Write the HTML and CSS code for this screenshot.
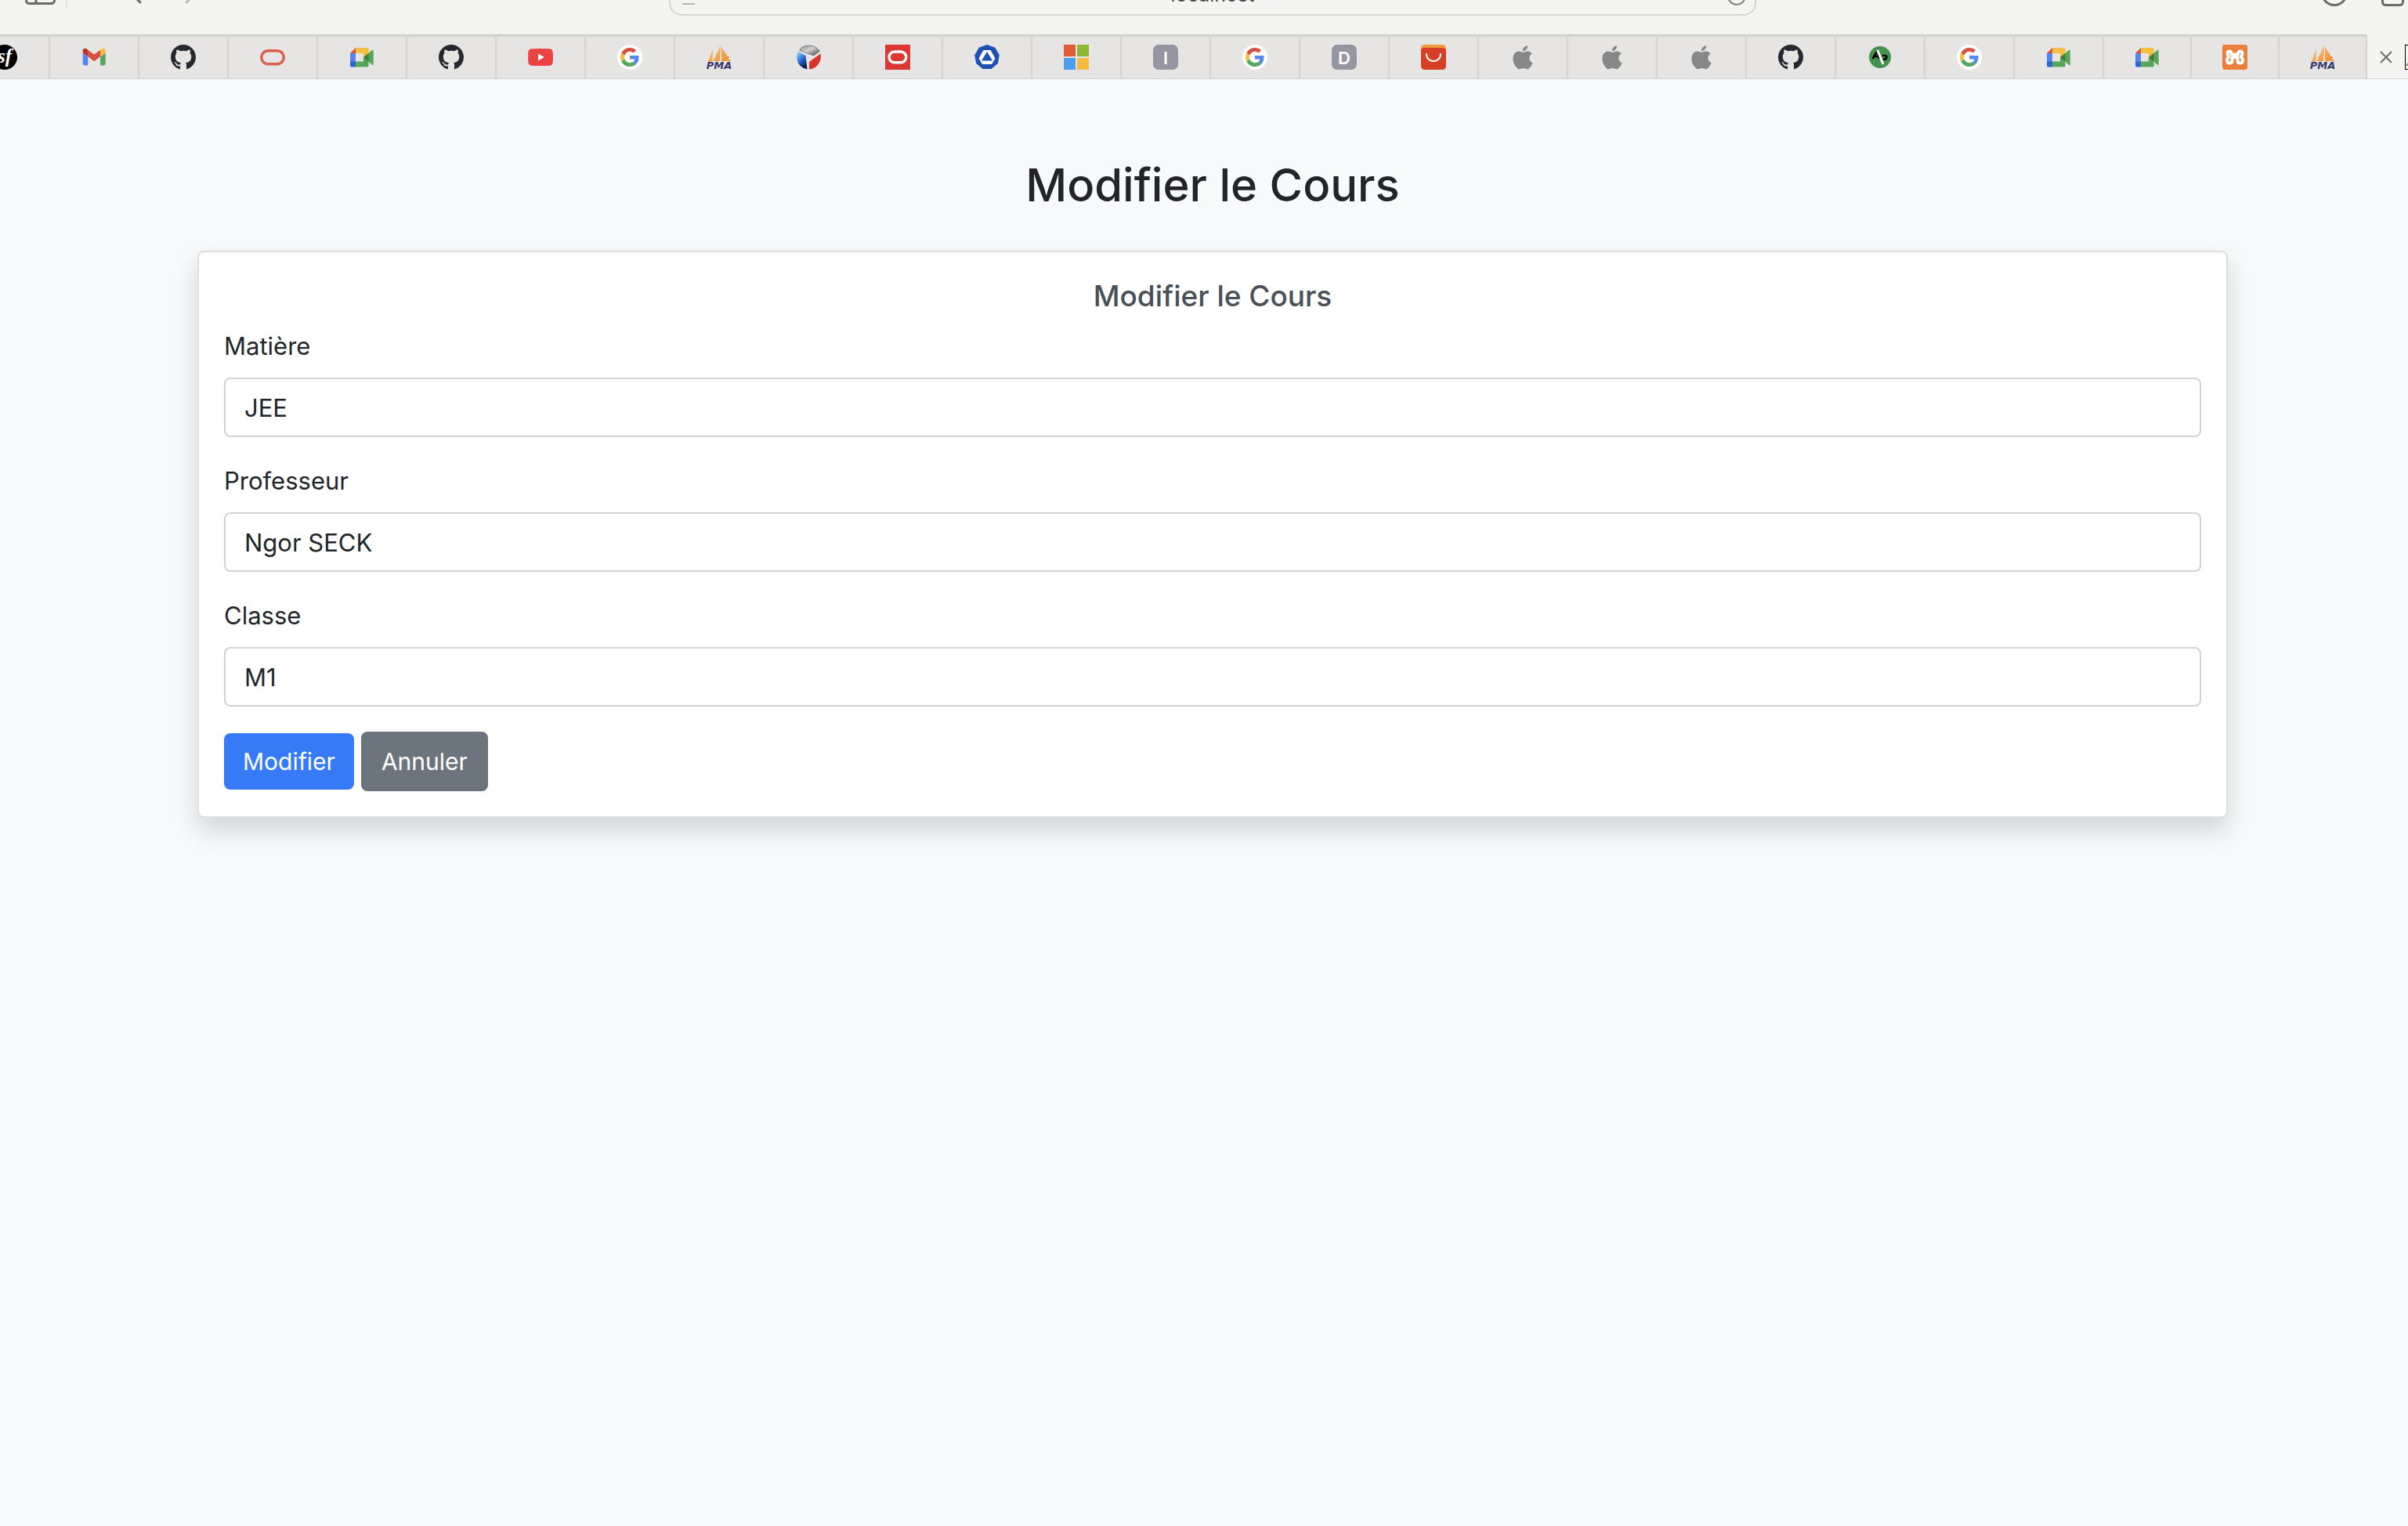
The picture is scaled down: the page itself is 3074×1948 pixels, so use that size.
FILE: index.html
```html
<!DOCTYPE html>
<html lang="fr">
<head>
<meta charset="utf-8">
<title>Modifier le Cours</title>
<link rel="stylesheet" href="styles.css">
</head>
<body>
<svg class="sprite" aria-hidden="true">
  <defs>
    <linearGradient id="sail" x1="0" y1="0" x2="1" y2="1"><stop offset="0" stop-color="#f8c88c"/><stop offset="1" stop-color="#ee8a2c"/></linearGradient>
    <linearGradient id="steel" x1="0" y1="0" x2="1" y2="1"><stop offset="0" stop-color="#8a8a8a"/><stop offset=".45" stop-color="#d0d0d0"/><stop offset="1" stop-color="#3c3c3c"/></linearGradient>
    <linearGradient id="azure" x1="0" y1="0" x2=".5" y2="1"><stop offset="0" stop-color="#a4e4f4"/><stop offset=".55" stop-color="#2c6cdc"/><stop offset="1" stop-color="#0c1c50"/></linearGradient>
    <symbol id="gmail" viewBox="0 0 32 32"><g transform="translate(1.7 4.7) scale(.33) translate(-52 -42)"><path fill="#5585ee" d="M58 108h14V74L52 59v43c0 3.32 2.69 6 6 6"/><path fill="#58a65c" d="M120 108h14c3.32 0 6-2.69 6-6V59l-20 15"/><path fill="#f3be42" d="M120 48v26l20-15v-8c0-7.42-8.47-11.65-14.4-7.2"/><path fill="#d8503f" d="M72 74V48l24 18 24-18v26L96 92"/><path fill="#b5352a" d="M52 51v8l20 15V48l-5.6-4.2c-5.94-4.45-14.4-.22-14.4 7.2"/></g></symbol>
    <symbol id="github" viewBox="0 0 16 16"><path fill="#25292f" d="M8 0C3.58 0 0 3.58 0 8c0 3.54 2.29 6.53 5.47 7.59.4.07.55-.17.55-.38 0-.19-.01-.82-.01-1.49-2.01.37-2.53-.49-2.69-.94-.09-.23-.48-.94-.82-1.13-.28-.15-.68-.52-.01-.53.63-.01 1.08.58 1.23.82.72 1.21 1.87.87 2.33.66.07-.52.28-.87.51-1.07-1.78-.2-3.64-.89-3.64-3.95 0-.87.31-1.59.82-2.15-.08-.2-.36-1.02.08-2.12 0 0 .67-.21 2.2.82.64-.18 1.32-.27 2-.27s1.36.09 2 .27c1.53-1.04 2.2-.82 2.2-.82.44 1.1.16 1.92.08 2.12.51.56.82 1.27.82 2.15 0 3.07-1.87 3.75-3.65 3.95.29.25.54.73.54 1.48 0 1.07-.01 1.93-.01 2.2 0 .21.15.46.55.38A8.01 8.01 0 0 0 16 8c0-4.42-3.58-8-8-8z"/></symbol>
    <symbol id="meet" viewBox="0 0 32 32"><g transform="translate(1 4) scale(.34)"><path fill="#3d7d3f" d="M49.5 36l8.53 9.75 11.47 7.33 2-17.02-2-16.64-11.69 6.44z"/><path fill="#3063cc" d="M0 51.5V66c0 3.315 2.685 6 6 6h14.5l3-10.96-3-9.54-9.95-3z"/><path fill="#d8503f" d="M20.5 0L0 20.5l10.55 3 9.95-3 2.95-9.41z"/><path fill="#5585ee" d="M20.5 20.5H0v31h20.5z"/><path fill="#58a65c" d="M82.6 8.68L69.5 19.42v33.66l13.16 10.79c1.97 1.54 4.85.135 4.85-2.37V11c0-2.535-2.945-3.925-4.91-2.32zM49.5 36v15.5h-29V72h43c3.315 0 6-2.685 6-6V53.08z"/><path fill="#f3be42" d="M63.5 0h-43v20.5h29V36l20-16.57V6c0-3.315-2.685-6-6-6z"/></g></symbol>
    <symbol id="google" viewBox="0 0 32 32"><circle cx="16" cy="16" r="16" fill="#fff"/><g transform="translate(4 4) scale(.5)"><path fill="#d8503f" d="M24 9.5c3.54 0 6.71 1.22 9.21 3.6l6.85-6.85C35.9 2.38 30.47 0 24 0 14.62 0 6.51 5.38 2.56 13.22l7.98 6.19C12.43 13.72 17.74 9.5 24 9.5z"/><path fill="#5585ee" d="M46.98 24.55c0-1.57-.15-3.09-.38-4.55H24v9.02h12.94c-.58 2.96-2.26 5.48-4.78 7.18l7.73 6c4.51-4.18 7.09-10.36 7.09-17.65z"/><path fill="#f3be42" d="M10.53 28.59c-.48-1.45-.76-2.99-.76-4.59s.27-3.14.76-4.59l-7.98-6.19C.92 16.46 0 20.12 0 24c0 3.88.92 7.54 2.56 10.78l7.97-6.19z"/><path fill="#58a65c" d="M24 48c6.48 0 11.93-2.13 15.89-5.81l-7.73-6c-2.15 1.45-4.92 2.3-8.16 2.3-6.26 0-11.57-4.22-13.47-9.91l-7.98 6.19C6.51 42.62 14.62 48 24 48z"/></g></symbol>
    <symbol id="pma" viewBox="0 0 32 32"><path fill="url(#sail)" d="M8 5L7.500 21l-6 1zM18 0l-1 21H8.500C11 15 15 8 18 0zM19 3l8 12 2 0-1 3 4 4-6-2 0 1h-7z"/><text class="pma-text" x="16" y="31" text-anchor="middle">PMA</text></symbol>
    <symbol id="apple" viewBox="0 0 32 32"><path fill="#878787" transform="translate(.5 1.3) scale(1.29 1.25)" d="M12.152 6.896c-.948 0-2.415-1.078-3.96-1.04-2.04.027-3.91 1.183-4.961 3.014-2.117 3.675-.546 9.103 1.519 12.09 1.013 1.454 2.208 3.09 3.792 3.039 1.52-.065 2.09-.987 3.935-.987 1.831 0 2.35.987 3.96.948 1.637-.026 2.676-1.48 3.676-2.948 1.156-1.688 1.636-3.325 1.662-3.415-.039-.013-3.182-1.221-3.22-4.857-.026-3.04 2.48-4.494 2.597-4.559-1.429-2.09-3.623-2.324-4.39-2.376-2-.156-3.675 1.09-4.61 1.09zM15.53 3.83c.843-1.012 1.4-2.427 1.245-3.83-1.207.052-2.662.805-3.532 1.818-.78.896-1.454 2.338-1.273 3.714 1.338.104 2.715-.688 3.559-1.701"/></symbol>
  </defs>
</svg>
<div class="window">
  <header class="chrome">
    <div class="toolbar">
      <div class="tools">
        <svg width="300" height="56" viewBox="0 0 300 56" fill="none" stroke="#6b6b69" stroke-width="3" stroke-linecap="round">
          <rect x="33.500" y="10" width="36" height="30.500" rx="4"/><path d="M46 10v30"/>
          <path d="M85 12v34" stroke="#e4e4e2" stroke-width="2" stroke-linecap="butt"/>
          <path d="M179 39L166 26l13-13"/><path d="M238 39l13-13-13-13" stroke="#b9b9b7"/>
        </svg>
      </div>
      <div class="address">
        <svg width="24" height="56" viewBox="0 0 24 56" stroke="#b4b4b2" stroke-width="2"><path d="M4 40h16M4 32h16"/></svg>
        <span>localhost</span>
        <svg width="24" height="56" viewBox="0 0 24 56" fill="none" stroke="#7b7b79" stroke-width="2"><path d="M17 20A11 11 0 1 0 23 30"/></svg>
      </div>
      <div class="tools tools-end">
        <svg width="140" height="56" viewBox="0 0 140 56" fill="none" stroke="#6b6b69" stroke-width="3"><circle cx="24" cy="27" r="15.500"/><rect x="85.500" y="12" width="26" height="30.500" rx="4"/></svg>
      </div>
    </div>
    <nav class="tabs" aria-label="Onglets">
      <a class="tab" href="#"><svg viewBox="0 0 32 32"><circle cx="16" cy="16" r="16"/><text class="sf" x="16" y="23" text-anchor="middle">sf</text></svg></a>
      <a class="tab" href="#"><svg><use href="#gmail"/></svg></a>
      <a class="tab" href="#"><svg><use href="#github"/></svg></a>
      <a class="tab" href="#"><svg viewBox="0 0 32 32"><rect x="1.700" y="7.700" width="28.600" height="17" rx="8.500" fill="none" stroke="#d9614b" stroke-width="3.400"/></svg></a>
      <a class="tab" href="#"><svg><use href="#meet"/></svg></a>
      <a class="tab" href="#"><svg><use href="#github"/></svg></a>
      <a class="tab" href="#"><svg viewBox="0 0 32 32"><path fill="#eb4242" d="M5 5.200Q16 4.800 27 5.200 31.500 5.400 31.700 10q.5 6 0 12-.2 4.600-4.700 4.800-11 .4-22 0Q.5 26.600.3 22q-.5-6 0-12Q.5 5.400 5 5.200z"/><path fill="#fff" d="M13 11.500l8 4.500-8 4.500z"/></svg></a>
      <a class="tab" href="#"><svg><use href="#google"/></svg></a>
      <a class="tab" href="#"><svg><use href="#pma"/></svg></a>
      <a class="tab" href="#"><svg viewBox="0 0 32 32"><path fill="url(#steel)" stroke="#555" stroke-width=".6" d="M5 6C10-1 25-1 30.500 8.500L22.500 14 5 7.500z"/><path fill="url(#azure)" d="M3 8.500L12.500 14 14.500 31.200C3 30-1.500 18 3 8.500z"/><path fill="#d8342a" d="M17 22L31.500 11.500C33.500 22 26 31 17 31.200z"/></svg></a>
      <a class="tab" href="#"><svg viewBox="0 0 32 32"><path fill="#db3832" d="M0 0h32v32H0z"/><rect x="5" y="9" width="21.800" height="13.800" rx="6.900" fill="none" stroke="#fff" stroke-width="3.400"/></svg></a>
      <a class="tab" href="#"><svg viewBox="0 0 32 32"><path fill="#2050b4" d="M16 0l10.300 3.700 5.500 9.500L29.900 24l-8.400 7h-11l-8.400-7L.2 13.200l5.500-9.500z"/><path fill="#fff" d="M11.500 7h9l6 10.500-4.500 7.500H10l-4.500-7.500z"/><path fill="#2050b4" d="M16 9l7 11.500H9z"/></svg></a>
      <a class="tab" href="#"><svg viewBox="0 0 32 32"><path fill="#e05c36" d="M0 0h15v15H0z"/><path fill="#8cb835" d="M17 0h15v15H17z"/><path fill="#4ca0ea" d="M0 17h15v15H0z"/><path fill="#f4bb41" d="M17 17h15v15H17z"/></svg></a>
      <a class="tab" href="#"><span class="letter">I</span></a>
      <a class="tab" href="#"><svg><use href="#google"/></svg></a>
      <a class="tab" href="#"><span class="letter">D</span></a>
      <a class="tab" href="#"><svg viewBox="0 0 32 32"><path fill="#f09b38" d="M5 0h22q5 0 5 5v5H0V5q0-5 5-5z"/><path fill="#d54025" d="M5 4h22q5 0 5 4v19q0 5-5 5H5q-5 0-5-5V8q0-4 5-4z"/><path fill="none" stroke="#fff" stroke-width="2" stroke-linecap="round" d="M7 12c0 12 18 12 18 0"/></svg></a>
      <a class="tab" href="#"><svg><use href="#apple"/></svg></a>
      <a class="tab" href="#"><svg><use href="#apple"/></svg></a>
      <a class="tab" href="#"><svg><use href="#apple"/></svg></a>
      <a class="tab" href="#"><svg><use href="#github"/></svg></a>
      <a class="tab" href="#"><svg viewBox="0 0 32 32"><circle cx="16" cy="16" r="14" fill="#449150"/><path fill="none" stroke="#000" stroke-width="2.600" d="M6.500 18L12.500 8l2.500 10M8 15h6M19 14h3.500q3 .5 1.500 3.500-2 2-4 .5"/><path stroke="#fff" stroke-width="3" d="M12.500 6.500l7.500 18.500"/></svg></a>
      <a class="tab" href="#"><svg><use href="#google"/></svg></a>
      <a class="tab" href="#"><svg><use href="#meet"/></svg></a>
      <a class="tab tab-narrow" href="#"><svg><use href="#meet"/></svg></a>
      <a class="tab tab-narrow" href="#"><svg viewBox="0 0 32 32"><rect width="32" height="32" rx="3" fill="#ea803c"/><path fill="none" stroke="#fff" stroke-width="4" stroke-linecap="round" stroke-linejoin="round" d="M11.500 12.500Q12 8.500 9.500 8.500 6.500 8.500 6.500 11.500q0 2.500 2 4-2.500 2-2.500 4.500 0 3.500 3.500 3.500 3 0 3-3v-3q0-1.500 1.500-1.500h4q1.500 0 1.500 1.500v3q0 3 3 3 3.500 0 3.500-3.500 0-2.500-2.500-4.500 2-1.500 2-4 0-3-3-3-2.500 0-2.500 4h-5"/></svg></a>
      <a class="tab tab-narrow" href="#"><svg><use href="#pma"/></svg></a>
      <div class="tab-active">
        <button class="close" type="button" aria-label="Fermer"><svg width="16" height="16" viewBox="0 0 16 16" stroke="#6f6f6d" stroke-width="2"><path d="M1 1l14 14M15 1L1 15"/></svg></button>
        <svg width="32" height="32" viewBox="0 0 32 32"><rect x=".5" y=".5" width="31" height="31" fill="#f4f4f2" stroke="#000"/><path fill="#a89468" d="M1 26l6-6 8 7H1z"/></svg>
      </div>
    </nav>
  </header>
  <main class="container">
    <h1>Modifier le Cours</h1>
    <section class="card">
      <h2>Modifier le Cours</h2>
      <form>
        <div class="field"><label for="matiere">Matière</label><input id="matiere" type="text" value="JEE"></div>
        <div class="field"><label for="professeur">Professeur</label><input id="professeur" type="text" value="Ngor SECK"></div>
        <div class="field"><label for="classe">Classe</label><input id="classe" type="text" value="M1"></div>
        <div class="actions">
          <button class="btn btn-primary" type="submit">Modifier</button>
          <a class="btn btn-secondary" href="#">Annuler</a>
        </div>
      </form>
    </section>
  </main>
</div>
</body>
</html>
```
FILE: styles.css
```css
*, *::before, *::after { box-sizing: border-box; }

body {
  margin: 0;
  background: #f8f9fb;
  color: #212529;
  font: 400 31px/48px Inter, "Liberation Sans", sans-serif;
  overflow-x: hidden;
}

svg { display: block; flex: none; }
.sprite { position: absolute; width: 0; height: 0; }

/* The window runs slightly past the right edge of the screen */
.window { margin-right: -22px; }

.chrome {
  background: #f4f4f2;
  border-bottom: 1px solid #cfd3d7;
}

.toolbar {
  display: flex;
  align-items: flex-end;
  height: 44px;
  padding-bottom: 24px;
  overflow: hidden;
}
.tools { flex: 1; display: flex; }
.tools-end { justify-content: flex-end; }
.address {
  flex: none;
  display: flex;
  align-items: center;
  justify-content: space-between;
  width: 1388px;
  height: 56px;
  padding: 2px 11px 0;
  border: 2px solid #d5d5d3;
  border-radius: 16px;
  color: #4a4a48;
  font-size: 25px;
}

.tabs {
  display: flex;
  height: 56px;
  margin-left: -50px;
}
.tab {
  flex: none;
  display: flex;
  align-items: center;
  justify-content: center;
  width: 114px;
  padding-top: 2px;
  background: #e6e5e3;
  border-right: 2px solid #d4d4d2;
  box-shadow: inset 0 1px #bebebc, inset 0 4px 4px -2px #cfcfcd;
}
.tab-narrow { width: 112px; }
.tab svg { width: 32px; height: 32px; }
.letter {
  width: 32px;
  height: 32px;
  border-radius: 7px;
  background: #9696a2;
  color: #fff;
  font-size: 22px;
  font-weight: 600;
  line-height: 34px;
  text-align: center;
}
.tab:has(.letter) { text-decoration: none; }
.pma-text { font: italic 700 13px "DejaVu Sans", sans-serif; fill: #38386a; }
.sf { font: italic 700 25px "Liberation Serif", serif; fill: #fff; }
.tab-active {
  flex: 1;
  display: flex;
  align-items: center;
  gap: 16px;
  padding: 2px 0 0 16px;
  overflow: hidden;
}
.close { padding: 0; border: 0; background: none; }

.container {
  width: 2640px;
  max-width: 100%;
  margin: 0 auto;
  padding: 97px 24px 64px;
}

h1 {
  margin: 0 0 46px;
  font-size: 58px;
  font-weight: 500;
  line-height: 76px;
  text-align: center;
}

.card {
  padding: 32px;
  background: #fff;
  border: 2px solid #dedfe0;
  border-radius: 8px;
  box-shadow: 0 16px 32px rgba(0, 0, 0, .15);
}
.card h2 {
  margin: 0 0 16px;
  color: #495057;
  font-size: 37px;
  font-weight: 500;
  line-height: 48px;
  text-align: center;
}

.field { margin-bottom: 32px; }
.field label { display: block; margin-bottom: 16px; }
.field input {
  display: block;
  width: 100%;
  height: 76px;
  padding: 0 24px;
  border: 2px solid #ced4da;
  border-radius: 8px;
  background: #fff;
  color: inherit;
  font: inherit;
}

.actions { display: flex; align-items: center; gap: 9px; }
.btn {
  padding: 12px 24px;
  border: 0;
  border-radius: 8px;
  color: #fff;
  font: inherit;
  font-size: 30px;
  text-align: center;
  text-decoration: none;
}
.btn-primary { background: #377af6; }
.btn-secondary { background: #6c757d; border: 2px solid #6c757d; }
```
